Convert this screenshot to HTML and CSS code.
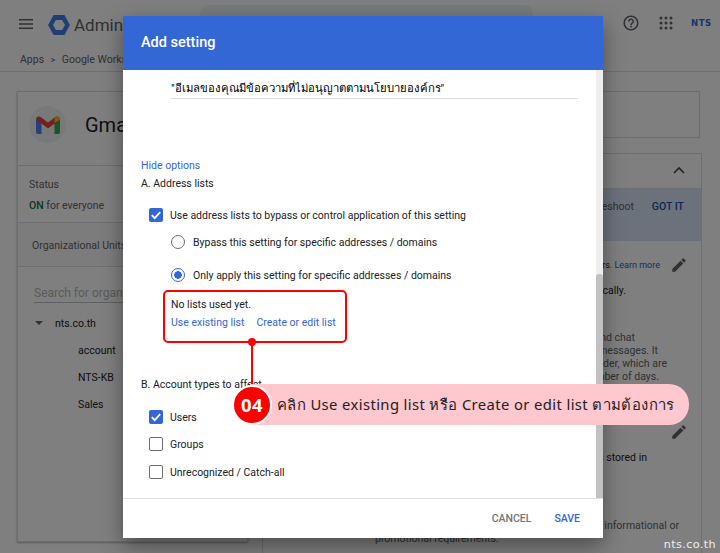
FILE: index.html
```html
<!DOCTYPE html>
<html lang="th">
<head>
<meta charset="utf-8">
<title>Add setting</title>
<link rel="stylesheet" href="styles.css">
</head>
<body>
<div class="page">
  <header class="topbar">
    <svg class="menu" viewBox="0 0 14 10" width="14" height="10"><path d="M0 0h14v1.4H0zM0 4.3h14v1.4H0zM0 8.6h14V10H0z"/></svg>
    <svg class="logo" viewBox="0 0 24 22" width="22" height="20"><path d="M6 0h12l6 11-6 11H6L0 11z" fill="#3f7fe8"/><path d="M8.6 5.500h6.800l3.200 5.500-3.200 5.500H8.600L5.400 11z" fill="#fff"/></svg>
    <span class="brand">Admin</span>
    <div class="search"></div>
    <div class="task"></div>
    <svg class="help" viewBox="0 0 24 24" width="18" height="18"><path d="M11 18h2v-2h-2v2zm1-16C6.480 2 2 6.480 2 12s4.480 10 10 10 10-4.480 10-10S17.520 2 12 2zm0 18c-4.410 0-8-3.590-8-8s3.590-8 8-8 8 3.590 8 8-3.590 8-8 8zm0-14c-2.210 0-4 1.790-4 4h2c0-1.100.9-2 2-2s2 .9 2 2c0 2-3 1.750-3 5h2c0-2.250 3-2.500 3-5 0-2.210-1.790-4-4-4z"/></svg>
    <svg class="apps" viewBox="0 0 14 14" width="14" height="14"><circle cx="2" cy="2" r="1.500"/><circle cx="7" cy="2" r="1.500"/><circle cx="12" cy="2" r="1.500"/><circle cx="2" cy="7" r="1.500"/><circle cx="7" cy="7" r="1.500"/><circle cx="12" cy="7" r="1.500"/><circle cx="2" cy="12" r="1.500"/><circle cx="7" cy="12" r="1.500"/><circle cx="12" cy="12" r="1.500"/></svg>
    <span class="nts">NTS</span>
  </header>
  <nav class="crumbs"><span>Apps</span><span class="sep">&gt;</span><span>Google Workspace</span></nav>
  <main class="main">
    <aside class="leftcard">
      <div class="apphead">
        <div class="appicon">
          <svg viewBox="0 0 24 18" width="24" height="18">
            <path d="M0 3v13a2 2 0 0 0 2 2h3.500V7z" fill="#4285f4"/>
            <path d="M24 3v13a2 2 0 0 1-2 2h-3.500V7z" fill="#34a853"/>
            <path d="M0 3.500a3 3 0 0 1 5-2.300l7 5.300 7-5.300a3 3 0 0 1 5 2.300L12 12.500z" fill="#ea4335"/>
            <path d="M18.500 5.500 19 1.200a3 3 0 0 1 5 2.300L18.500 7z" fill="#fbbc04"/>
          </svg>
        </div>
        <span class="appname">Gmail</span>
      </div>
      <div class="status">
        <div class="statuslabel">Status</div>
        <div class="statusval"><b>ON</b> for everyone</div>
      </div>
      <div class="orgband">Organizational Units</div>
      <div class="orgsearch"><span>Search for organizational units</span></div>
      <div class="orgroot"><i class="caret"></i>nts.co.th</div>
      <div class="orgitem">account</div>
      <div class="orgitem">NTS-KB</div>
      <div class="orgitem">Sales</div>
    </aside>
    <section class="rightcol">
      <div class="notice"></div>
      <div class="settings">
        <div class="sethead">
          <svg viewBox="0 0 12 8" width="12" height="8"><path d="M1 7l5-5 5 5" fill="none" stroke="#444" stroke-width="1.600"/></svg>
        </div>
        <div class="banner"><span>troubleshoot</span><b>GOT IT</b></div>
        <div class="line learn"><span>others. <a>Learn more</a></span>
          <svg class="pen" viewBox="0 0 24 24" width="18" height="18"><path d="M3 17.250V21h3.750L17.810 9.940l-3.750-3.750L3 17.250zM20.710 7.040a1 1 0 0 0 0-1.410l-2.340-2.340a1 1 0 0 0-1.410 0l-1.830 1.830 3.750 3.750 1.830-1.830z"/></svg>
        </div>
        <div class="line dark auto">automatically.</div>
        <div class="para">
          <div class="p1">and chat</div>
          <div class="p2">messages. It</div>
          <div>folder, which are</div>
          <div class="p4">number of days.</div>
        </div>
        <div class="line penrow">
          <svg class="pen" viewBox="0 0 24 24" width="18" height="18"><path d="M3 17.250V21h3.750L17.810 9.940l-3.750-3.750L3 17.250zM20.710 7.040a1 1 0 0 0 0-1.410l-2.340-2.340a1 1 0 0 0-1.410 0l-1.830 1.830 3.750 3.750 1.830-1.830z"/></svg>
        </div>
        <div class="line dark stored">messages stored in</div>
        <div class="promo">
          <div class="promo1">informational or</div>
          <div class="promo2">promotional requirements.</div>
        </div>
      </div>
    </section>
  </main>
</div>
<div class="scrim"></div>

<div class="dialog">
  <div class="dhead">Add setting</div>
  <div class="dmain">
    <div class="dbody">
      <div class="desc">"อีเมลของคุณมีข้อความที่ไม่อนุญาตตามนโยบายองค์กร"</div>
      <a class="hide">Hide options</a>
      <div class="seclabel">A. Address lists</div>
      <label class="check first"><i class="box on"><svg viewBox="0 0 14 14" width="14" height="14"><path d="M2.800 7.200l2.900 2.900 5.500-6" fill="none" stroke="#fff" stroke-width="1.800"/></svg></i>Use address lists to bypass or control application of this setting</label>
      <label class="radio r1"><i class="dot"></i>Bypass this setting for specific addresses / domains</label>
      <label class="radio r2"><i class="dot on"></i>Only apply this setting for specific addresses / domains</label>
      <div class="lists">
        <div class="nolist">No lists used yet.</div>
        <div class="listlinks"><a>Use existing list</a><a>Create or edit list</a></div>
      </div>
      <div class="seclabel b">B. Account types to affect</div>
      <label class="check u"><i class="box on"><svg viewBox="0 0 14 14" width="14" height="14"><path d="M2.800 7.200l2.900 2.900 5.500-6" fill="none" stroke="#fff" stroke-width="1.800"/></svg></i>Users</label>
      <label class="check g"><i class="box"></i>Groups</label>
      <label class="check c"><i class="box"></i>Unrecognized / Catch-all</label>
    </div>
    <div class="track"><div class="thumb"></div></div>
  </div>
  <div class="dfoot"><a class="cancel">CANCEL</a><a class="save">SAVE</a></div>
</div>

<div class="redbox"></div>
<div class="connector"></div>
<div class="conndot"></div>
<div class="callout">
  <span class="num">04</span>
  <span class="calltext">คลิก Use existing list หรือ Create or edit list ตามต้องการ</span>
</div>
<div class="mark">nts.co.th</div>
</body>
</html>
```

FILE: styles.css
```css
* { box-sizing: border-box; }
html, body { margin: 0; padding: 0; }
body {
  width: 720px; height: 553px; overflow: hidden; position: relative;
  font-family: Roboto, "Noto Sans", sans-serif; font-size: 10.5px; color: #202124; background: #fff;
}
.page { width: 720px; height: 553px; overflow: hidden; }
.scrim { position: absolute; inset: 0; background: rgba(0,0,0,.5); }

/* backdrop page */
.topbar { height: 50px; display: flex; align-items: center; padding-left: 19px; }
.menu { fill: #5f6368; flex: none; margin-top: -3px; }
.logo { flex: none; margin-left: 15px; }
.brand { margin-left: 4px; width: 126px; font-size: 17px; color: #5f6368; flex: none; }
.search { width: 333px; height: 40px; flex: none; background: #f1f3f4; border-radius: 8px; }
.task { width: 10px; height: 16px; margin: 6px 0 0 57px; background: #5f6368; flex: none; }
.help { fill: #5f6368; margin-left: 22px; flex: none; margin-top: -4px; }
.apps { fill: #5f6368; margin-left: 19px; flex: none; margin-top: -4px; }
.nts { margin-left: 18px; margin-top: -4px; font: 700 8.500px "DejaVu Sans", sans-serif; letter-spacing: .6px; color: #2a6fd0; }
.crumbs { height: 22px; padding-left: 20px; display: flex; gap: 6.500px; border-bottom: 1px solid #dadce0; color: #5f6368; line-height: 20px; }
.sep { font-size: 9px; }
.main { display: flex; padding: 19px 0 0 17px; gap: 14px; }
.leftcard { width: 231px; height: 451px; flex: none; border: 1px solid #dadce0; box-shadow: 0 1px 2px rgba(0,0,0,.3); background: #fff; }
.apphead { height: 74px; display: flex; align-items: center; padding: 0 0 8px 11px; border-bottom: 1px solid #dadce0; }
.appicon { width: 37px; height: 37px; border-radius: 50%; background: #f1f3f4; display: flex; align-items: center; justify-content: center; }
.appname { margin-left: 19px; font-size: 20px; }
.status { height: 57px; padding: 12px 0 0 11px; border-bottom: 1px solid #dadce0; color: #5f6368; }
.statuslabel { line-height: 14px; }
.statusval { margin-top: 7px; line-height: 14px; }
.statusval b { color: #137333; font-weight: 500; }
.orgband { height: 44px; line-height: 45px; padding-left: 14px; background: #f8f9fa; border-bottom: 1px solid #dadce0; color: #5f6368; }
.orgsearch { margin: 18px 0 0 16px; height: 18px; border-bottom: 1px solid #bdc1c6; color: #b4b4b4; font-size: 12px; line-height: 17px; white-space: nowrap; overflow: hidden; }
.orgroot { display: flex; align-items: center; height: 14px; margin-top: 13px; padding-left: 17px; white-space: nowrap; }
.caret { width: 0; height: 0; margin-right: 12px; border: 4.500px solid transparent; border-top-color: #5f6368; border-bottom: 0; }
.orgitem { margin-top: 13px; height: 14px; line-height: 14px; padding-left: 60px; position: relative; top: 1px; }
.rightcol { width: 440px; flex: none; }
.notice { height: 47px; width: 438px; border: 1px solid #dadce0; }
.settings { margin-top: 15px; height: 420px; border: 1px solid #dadce0; border-bottom: 0; text-align: right; }
.sethead { height: 35px; padding: 10px 16px 0 0; border-bottom: 1px solid #dadce0; }
.banner { height: 52px; background: #d8e4f8; padding: 10px 17px 0 0; display: flex; justify-content: flex-end; gap: 18px; color: #5f6368; line-height: 16px; }
.banner b { color: #1a4fa8; font-weight: 500; }
.line { position: relative; line-height: 14px; padding-right: 34px; }
.learn { height: 32px; padding-top: 17px; font-size: 9px; padding-right: 41px; }
.learn a { color: #1a5fd0; }
.pen { position: absolute; right: 13px; fill: #5f6368; top: 15px; }
.dark { color: #202124; }
.auto { height: 14px; margin-top: 11px; padding-right: 75px; }
.para { margin-top: 33px; padding-right: 34px; line-height: 13px; color: #5f6368; }
.p1 { padding-right: 32px; }
.p2 { padding-right: 9px; }
.p4 { padding-right: 8px; }
.penrow { height: 14px; margin-top: 38px; }
.penrow .pen { top: 2px; }
.stored { margin-top: 16px; padding-right: 54px; }
.promo { margin-top: 54px; line-height: 13px; color: #5f6368; text-align: left; }
.promo1 { text-align: right; padding-right: 22px; }
.promo2 { padding-left: 112px; }

/* dialog */
.dialog { position: absolute; left: 123px; top: 16px; width: 480px; height: 522px; background: #fff; box-shadow: 0 8px 20px rgba(0,0,0,.4); display: flex; flex-direction: column; color: #202124; }
.dhead { height: 54px; flex: none; background: #3367d6; color: #fff; font-size: 14.500px; font-weight: 500; line-height: 54px; padding-left: 18px; }
.dmain { flex: 1; display: flex; min-height: 0; }
.dbody { flex: 1; padding-left: 18px; overflow: hidden; }
.track { width: 7px; flex: none; background: #eee; padding-top: 204px; }
.thumb { height: 224px; background: #c1c1c1; border-radius: 3px 3px 0 0; }
.desc { margin: 9px 0 0 30px; width: 407px; height: 20px; border-bottom: 1px solid #ddd; color: #000; font-size: 11.300px; line-height: 19px; white-space: nowrap; }
a { color: #3367d6; }
.hide { display: block; margin-top: 60px; line-height: 14px; }
.seclabel { margin-top: 4px; line-height: 14px; }
.seclabel.b { margin-top: 27px; }
.check, .radio { display: flex; align-items: center; height: 14px; white-space: nowrap; }
.check { margin-left: 8px; }
.first { margin-top: 17px; }
.box { flex: none; width: 14px; height: 14px; margin-right: 7px; border: 1px solid #6e6e6e; border-radius: 2px; display: block; }
.box.on { background: #3367d6; border: 0; }
.box svg { display: block; }
.radio { margin-left: 30px; }
.r1 { margin-top: 13px; }
.r2 { margin-top: 19px; }
.dot { flex: none; width: 14px; height: 14px; margin-right: 8px; border: 1px solid #6e6e6e; border-radius: 50%; display: block; }
.dot.on { border-color: #3367d6; background: radial-gradient(circle, #3367d6 0 3.500px, #fff 4px); }
.lists { margin: 16px 0 0 30px; height: 53px; }
.nolist { line-height: 14px; }
.listlinks { margin-top: 4px; line-height: 14px; display: flex; gap: 12px; }
.u { margin-top: 18px; }
.g { margin-top: 13px; }
.c { margin-top: 14px; }
.dfoot { height: 40px; flex: none; border-top: 1px solid #e0e0e0; display: flex; justify-content: flex-end; align-items: center; gap: 23px; padding-right: 23px; font-weight: 500; }
.cancel { color: #757575; }

/* annotation layer */
.redbox { position: absolute; left: 163px; top: 290px; width: 184px; height: 53px; border: 2px solid #f00; border-radius: 5px; }
.connector { position: absolute; left: 251px; top: 342px; width: 2px; height: 46px; background: #f00; }
.conndot { position: absolute; left: 248px; top: 338px; width: 8px; height: 8px; border-radius: 50%; background: #f00; }
.callout { position: absolute; left: 232px; top: 384px; width: 457px; height: 41px; display: flex; align-items: center; background: linear-gradient(#ffc7ce, #ffc7ce) no-repeat 18px 0 / 439px 41px; border-radius: 0 20px 20px 0; }
.num { flex: none; width: 40px; height: 40px; border: 2px solid #fff; border-radius: 50%; background: #f00; color: #fff; font: 700 18.500px/36px "Noto Sans", sans-serif; letter-spacing: .5px; text-align: center; }
.calltext { margin-left: 5px; color: #222; font: 14.800px "Noto Sans", "DejaVu Sans", sans-serif; letter-spacing: .39px; white-space: nowrap; }
.mark { position: absolute; right: 4px; top: 538px; color: #eee; font: 11.200px/14px "DejaVu Sans", sans-serif; letter-spacing: .4px; }
```
